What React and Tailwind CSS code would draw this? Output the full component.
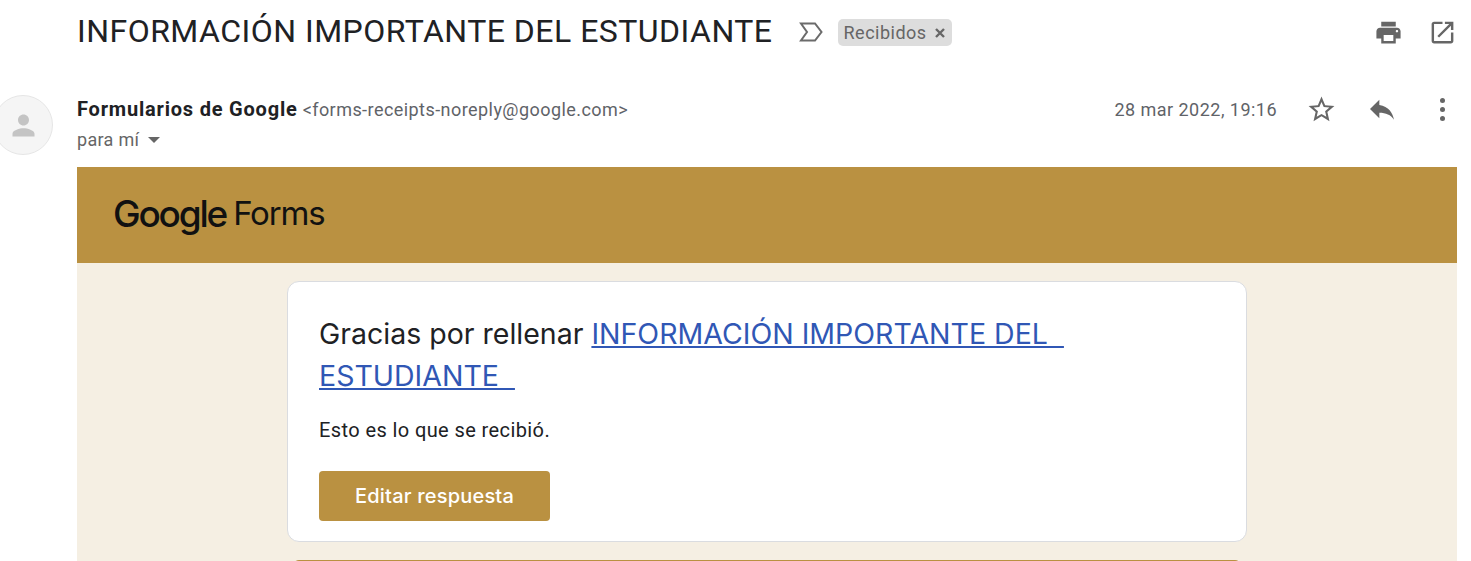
const roboto = "font-['Roboto',sans-serif]";

// Material icons, Gmail uses these
function Icon({ size, d, className }) {
  return (
    <svg width={size} height={size} viewBox="0 0 24 24" fill="#666666" className={className}>
      <path d={d} />
    </svg>
  );
}

export default function App() {
  return (
    <div className={`h-[561px] w-[1471px] overflow-hidden bg-white ${roboto}`}>
      {/* Subject row */}
      <div className="flex h-[64px] items-center pb-[2px] pl-[77px] pr-[14px]">
        <h1 className="text-[32px] leading-[62px] text-[#202124] font-normal whitespace-nowrap tracking-[0.48px]">
          INFORMACIÓN IMPORTANTE DEL ESTUDIANTE
        </h1>
        <svg width="26" height="22" viewBox="0 0 26 22" className="ml-[25px] mt-[2px]">
          <path d="M3 2.5 H17 L23.5 11 L17 19.5 H3 L9 11 Z" fill="none" stroke="#6b6b6b" strokeWidth="2" />
        </svg>
        <span className="ml-[14px] mt-[2px] flex h-[27px] items-center rounded-[5px] bg-[#dddddd] px-[6px] text-[18px] tracking-[0.5px] text-[#666666]">
          Recibidos
          <svg width="12" height="12" viewBox="0 0 12 12" className="ml-[7px] mt-[2px]">
            <path d="M2 2 L10 10 M10 2 L2 10" stroke="#666666" strokeWidth="2.4" />
          </svg>
        </span>
        <div className="ml-auto flex items-center gap-[25px] pt-[2px]">
          <Icon size={29} d="M19 8H5c-1.66 0-3 1.34-3 3v6h4v4h12v-4h4v-6c0-1.66-1.34-3-3-3zm-3 11H8v-5h8v5zm3-7c-.55 0-1-.45-1-1s.45-1 1-1 1 .45 1 1-.45 1-1 1zm-1-9H6v4h12V3z" />
          <Icon size={29} d="M19 19H5V5h7V3H5c-1.11 0-2 .9-2 2v14c0 1.1.89 2 2 2h14c1.1 0 2-.9 2-2v-7h-2v7zM14 3v2h3.59l-9.83 9.83 1.41 1.41L19 6.41V10h2V3h-7z" />
        </div>
      </div>

      {/* Sender row */}
      <div className="flex h-[103px] pr-[26px]">
        <div className="relative w-[77px] shrink-0">
          <div className="absolute left-[-7px] top-[31px] flex h-[60px] w-[60px] items-center justify-center rounded-full border border-[#e6e6e6] bg-[#f5f5f5]">
            <svg width="33" height="33" viewBox="0 0 24 24" fill="#c4c4c4">
              <path d="M12 12c2.21 0 4-1.79 4-4s-1.79-4-4-4-4 1.79-4 4 1.79 4 4 4zm0 2c-2.67 0-8 1.34-8 4v2h16v-2c0-2.66-5.33-4-8-4z" />
            </svg>
          </div>
        </div>
        <div className="flex-1 pt-[30px]">
          <div className="flex h-[30px] items-center text-[18px] whitespace-nowrap">
            <span className="text-[20px] tracking-[0.8px] font-bold text-[#202124]">Formularios de Google</span>
            <span className="ml-[5px] tracking-[0.44px] text-[#5f6368]">&lt;forms-receipts-noreply@google.com&gt;</span>
          </div>
          <div className="flex h-[30px] items-center text-[18px] tracking-[0.3px] text-[#666666]">
            para mí
            <span className="ml-[9px] mt-[1px] h-0 w-0 border-x-[6px] border-t-[6px] border-x-transparent border-t-[#666666]" />
          </div>
        </div>
        <div className="mt-[30px] flex h-[30px] items-center">
          <span className="text-[18px] tracking-[0.47px] text-[#5f6368]">28 mar 2022, 19:16</span>
          <Icon
            size={31}
            className="ml-[29px]"
            d="M22 9.24l-7.19-.62L12 2 9.19 8.63 2 9.24l5.46 4.73L5.82 21 12 17.27 18.18 21l-1.63-7.03L22 9.24zM12 15.4l-3.76 2.27 1-4.28-3.32-2.88 4.38-.38L12 6.1l1.71 4.04 4.38.38-3.32 2.88 1 4.28L12 15.4z"
          />
          <Icon
            size={32}
            className="ml-[29px]"
            d="M10 9V5l-7 7 7 7v-4.1c5 0 8.5 1.6 11 5.1-1-5-4-10-11-11z"
          />
          <div className="ml-[42px] flex flex-col gap-[4px]">
            <span className="h-[5px] w-[5px] rounded-full bg-[#666666]" />
            <span className="h-[5px] w-[5px] rounded-full bg-[#666666]" />
            <span className="h-[5px] w-[5px] rounded-full bg-[#666666]" />
          </div>
        </div>
      </div>

      {/* Email body */}
      <div className="ml-[77px] w-[1380px]">
        <div className="flex h-[96px] items-center bg-[#ba9141] pb-[2px] pl-[36px] font-['Inter',sans-serif] text-[#111111]">
          <span className="text-[37px] font-medium tracking-[-2.2px]">Google</span>
          <span className="ml-[7px] text-[33px] tracking-[-1.2px]">Forms</span>
        </div>
        <div className="h-[300px] bg-[#f5efe3] pt-[18px]">
          <div className="ml-[210px] h-[261px] w-[960px] rounded-[12px] border border-[#dadce0] bg-white pl-[31px] pt-[31px]">
            <p className="w-[800px] text-[28.5px] leading-[42px] text-[#202124] font-['Inter',sans-serif]">
              Gracias por rellenar{' '}
              <a href="#" className="text-[#3057b5] underline">
                {'INFORMACIÓN IMPORTANTE DEL\u00a0\u00a0 ESTUDIANTE\u00a0\u00a0'}
              </a>
            </p>
            <p className="mt-[19px] text-[20px] leading-[28px] tracking-[0.4px] text-[#202124]">
              Esto es lo que se recibió.
            </p>
            <button className="mt-[27px] flex h-[50px] w-[231px] items-center justify-center rounded-[4px] bg-[#ba9141] text-[20px] font-medium tracking-[0.2px] text-white font-['Inter',sans-serif]">
              Editar respuesta
            </button>
          </div>
          <div className="ml-[216px] mt-[18px] h-[20px] w-[948px] rounded-t-[6px] border-t-2 border-[#ba9141] bg-white" />
        </div>
      </div>
    </div>
  );
}
